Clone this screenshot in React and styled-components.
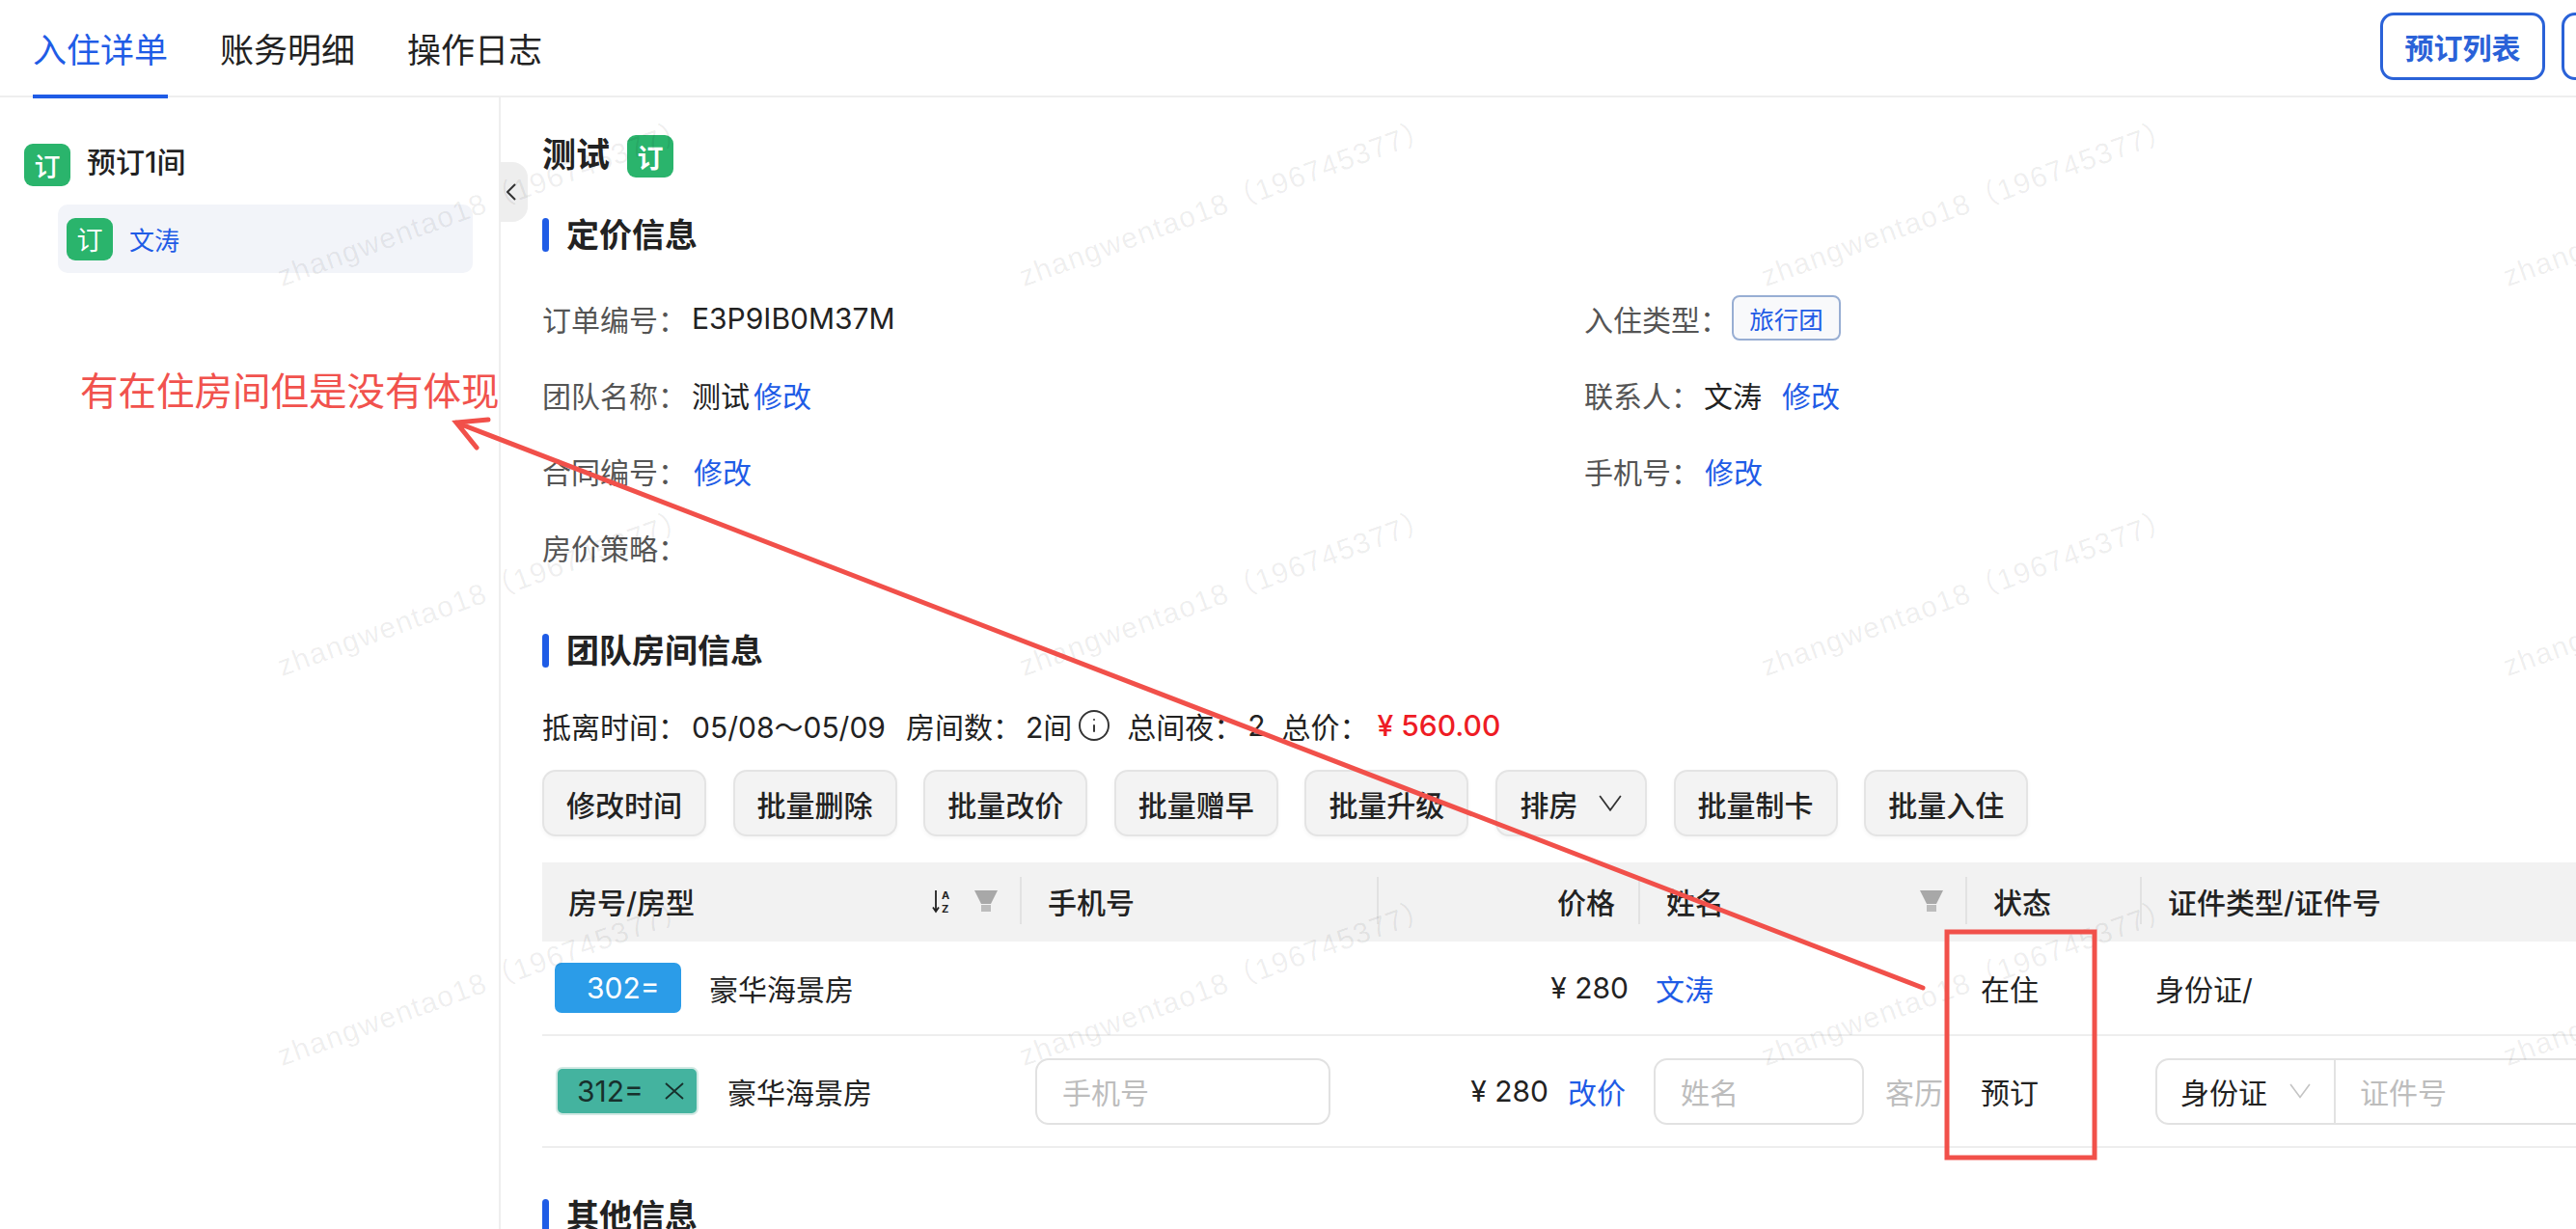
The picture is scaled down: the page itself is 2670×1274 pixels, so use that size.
import React from 'react';
import styled, { createGlobalStyle } from 'styled-components';
import { Info } from 'lucide-react';

const GlobalStyle = createGlobalStyle`
  html, body {
    margin: 0;
    padding: 0;
    background: #ffffff;
    overflow: hidden;
  }
  * {
    box-sizing: border-box;
  }
`;

const BLUE = '#1f5ce6';
const GREEN = '#2ab46c';

const Page = styled.div`
  position: relative;
  width: 2670px;
  height: 1274px;
  overflow: hidden;
  display: flex;
  flex-direction: column;
  background: #ffffff;
  color: #222222;
  font-family: Inter, 'Noto Sans CJK SC', sans-serif;
  font-size: 30px;
`;

const TopBar = styled.header`
  flex: none;
  height: 101px;
  padding-left: 34px;
  display: flex;
  border-bottom: 2px solid #eeeeee;
`;

const Tabs = styled.nav`
  display: flex;
  gap: 54px;
`;

const Tab = styled.div`
  height: 102px;
  display: flex;
  align-items: center;
  font-size: 35px;
  color: ${(p) => (p.$active ? BLUE : '#222222')};
  border-bottom: 4px solid ${(p) => (p.$active ? BLUE : 'transparent')};
`;

const TopActions = styled.div`
  margin-left: auto;
  width: 203px;
  padding-top: 13px;
  display: flex;
  gap: 17px;
  overflow: hidden;
`;

const OutlineButton = styled.div`
  flex: none;
  width: 171px;
  height: 70px;
  display: flex;
  align-items: center;
  justify-content: center;
  border: 3px solid #2a62d8;
  border-radius: 14px;
  color: #2a62d8;
  font-size: 30px;
  font-weight: 600;
`;

const Body = styled.div`
  flex: 1;
  position: relative;
  display: flex;
  min-height: 0;
`;

const Sidebar = styled.aside`
  flex: none;
  width: 519px;
  padding-top: 48px;
  border-right: 2px solid #eeeeee;
`;

const GroupHead = styled.div`
  height: 44px;
  display: flex;
  align-items: center;
  gap: 17px;
  padding-left: 25px;
  font-size: 30px;
  font-weight: 500;
`;

const RaisedText = styled.span`
  line-height: 1;
  padding-bottom: ${(p) => p.$by}px;
`;

const OrderBadge = styled.span`
  flex: none;
  width: 48px;
  height: 44px;
  display: flex;
  align-items: center;
  justify-content: center;
  background: ${GREEN};
  border-radius: 9px;
  color: #ffffff;
  font-size: 27px;
`;

const GuestRow = styled.div`
  margin: 19px 0 0 60px;
  width: 430px;
  height: 71px;
  padding-left: 9px;
  display: flex;
  align-items: center;
  gap: 17px;
  background: #f2f4f9;
  border-radius: 10px;
  color: ${BLUE};
  font-size: 26px;
`;

const CollapseHandle = styled.div`
  position: absolute;
  left: 519px;
  top: 67px;
  width: 28px;
  height: 62px;
  display: flex;
  align-items: center;
  padding-left: 6px;
  background: #eeeeee;
  border-radius: 0 16px 16px 0;
`;

const Main = styled.main`
  flex: 1;
  min-width: 0;
  padding: 39px 0 0 43px;
`;

const TitleRow = styled.div`
  height: 44px;
  display: flex;
  align-items: center;
  gap: 18px;
  font-size: 35px;
  font-weight: 700;
`;

const SectionTitle = styled.h3`
  margin: ${(p) => p.$top}px 0 0;
  height: 35px;
  padding-bottom: 4px;
  display: flex;
  align-items: center;
  gap: 18px;
  font-size: 34px;
  font-weight: 700;

  &::before {
    content: '';
    flex: none;
    align-self: flex-start;
    width: 7px;
    height: 35px;
    background: ${BLUE};
    border-radius: 4px;
  }
`;

const InfoGrid = styled.div`
  margin-top: 29px;
  display: grid;
  grid-template-columns: 1080px 1fr;
  grid-auto-rows: 79px;
`;

const InfoItem = styled.div`
  display: flex;
  align-items: center;
`;

const Label = styled.span`
  color: #555555;
`;

const Value = styled.span`
  margin-left: ${(p) => p.$gap || 0}px;
`;

const EditLink = styled.a`
  color: ${BLUE};
  margin-left: ${(p) => p.$gap || 0}px;
`;

const TypeTag = styled.span`
  margin-left: 3px;
  width: 113px;
  height: 47px;
  display: flex;
  align-items: center;
  justify-content: center;
  background: #f8f9fb;
  border: 2px solid #98aed3;
  border-radius: 8px;
  color: ${BLUE};
  font-size: 25.5px;
`;

const SummaryLine = styled.div`
  margin-top: 40px;
  height: 40px;
  display: flex;
  align-items: center;
`;

const SummaryItem = styled.span`
  margin-right: ${(p) => p.$gap}px;
  display: flex;
  align-items: center;
`;

const TotalPrice = styled.span`
  color: #ee1c25;
  font-weight: 500;
  margin-left: 9px;
`;

const InfoIcon = styled(Info)`
  margin-left: 5px;
`;

const ButtonRow = styled.div`
  margin-top: 26px;
  display: flex;
  gap: 27.6px;
`;

const GrayButton = styled.div`
  flex: none;
  width: ${(p) => p.$width || 170}px;
  height: 69px;
  display: flex;
  align-items: center;
  justify-content: center;
  gap: 22px;
  background: #f3f3f3;
  border: 2px solid #e4e4e4;
  border-radius: 14px;
  box-shadow: 0 2px 4px rgba(0, 0, 0, 0.04);
  font-size: 30px;
  font-weight: 500;
`;

const COLUMNS = '497px 370px 271px 339px 181px 450px';

const TableHead = styled.div`
  margin-top: 27px;
  height: 82px;
  display: grid;
  grid-template-columns: ${COLUMNS};
  background: #f2f2f2;
  font-weight: 500;
`;

const HeadCell = styled.div`
  position: relative;
  display: flex;
  align-items: center;
  justify-content: ${(p) => (p.$right ? 'flex-end' : 'flex-start')};
  padding: ${(p) => (p.$right ? '0 26px 2px 0' : '0 25px 2px 27px')};

  &:not(:last-child)::after {
    content: '';
    position: absolute;
    right: 0;
    top: 15px;
    height: 49px;
    width: 2px;
    background: #e2e2e2;
  }
`;

const HeadIcons = styled.span`
  margin-left: auto;
  display: flex;
  align-items: center;
  gap: 22px;
`;

const TableRow = styled.div`
  height: ${(p) => p.$height}px;
  display: grid;
  grid-template-columns: ${COLUMNS};
  border-bottom: 2px solid #eeeeee;
`;

const Cell = styled.div`
  min-width: 0;
  display: flex;
  align-items: center;
  justify-content: ${(p) => (p.$right ? 'flex-end' : 'flex-start')};
  padding: ${(p) => (p.$right ? `0 ${p.$pad}px 0 0` : `0 0 0 ${p.$pad}px`)};
  gap: ${(p) => p.$gap || 0}px;
`;

const RoomTag = styled.span`
  flex: none;
  width: 131px;
  height: 52px;
  padding-left: 33px;
  display: flex;
  align-items: center;
  background: #2b9ce8;
  border-radius: 7px;
  color: #ffffff;
`;

const AssignedTag = styled.span`
  flex: none;
  width: 148px;
  height: 50px;
  padding: 0 12px 0 20px;
  display: flex;
  align-items: center;
  justify-content: space-between;
  background: #44b39f;
  border: 2px solid #d3e9e4;
  border-radius: 7px;
  color: #17302c;
`;

const Field = styled.div`
  flex: none;
  width: ${(p) => p.$width}px;
  height: 69px;
  padding-left: 26px;
  display: flex;
  align-items: center;
  border: 2px solid #e2e2e2;
  border-radius: 14px;
  color: #bdbdbd;
`;

const MutedText = styled.span`
  color: #bdbdbd;
`;

const IdGroup = styled.div`
  flex: none;
  width: 640px;
  height: 69px;
  display: flex;
  border: 2px solid #e2e2e2;
  border-radius: 14px;
`;

const IdSelect = styled.div`
  flex: none;
  width: 185px;
  padding: 0 24px;
  display: flex;
  align-items: center;
  justify-content: space-between;
  border-right: 2px solid #e2e2e2;
`;

const IdInput = styled.div`
  flex: 1;
  padding-left: 25px;
  display: flex;
  align-items: center;
  color: #bdbdbd;
`;

const Watermarks = styled.div`
  position: absolute;
  inset: 0;
  padding: 262px 0 0 294px;
  display: grid;
  grid-template-columns: repeat(4, 769px);
  grid-auto-rows: 404px;
  overflow: hidden;
  pointer-events: none;
`;

const Watermark = styled.span`
  height: 40px;
  white-space: nowrap;
  transform-origin: 0 100%;
  transform: rotate(-20deg);
  color: rgba(0, 0, 0, 0.07);
  font-family: 'Liberation Sans', 'Noto Sans CJK SC', sans-serif;
  font-size: 30px;
  letter-spacing: 1.3px;
`;

const Markup = styled.svg`
  position: absolute;
  inset: 0;
  pointer-events: none;
`;

const Annotation = styled.div`
  position: absolute;
  left: 83px;
  top: 382px;
  color: #f1524d;
  font-size: 39.5px;
  line-height: 48px;
  white-space: nowrap;
`;

function SortIcon() {
  return (
    <svg width="22" height="25" viewBox="0 0 22 25">
      <path d="M4 1v21M1 18.5l3 4.5 3-4.5" fill="none" stroke="#222" strokeWidth="1.8" />
      <text x="10" y="10" fontSize="11" fontWeight="700" fill="#222">A</text>
      <text x="10" y="24" fontSize="11" fontWeight="700" fill="#222">Z</text>
    </svg>
  );
}

function FilterIcon() {
  return (
    <svg width="24" height="22" viewBox="0 0 24 22">
      <polygon points="0,0 24,0 17,14 7,14" fill="#a8a8a8" />
      <rect x="7" y="15" width="10" height="7" fill="#bcbcbc" />
    </svg>
  );
}

function Chevron({ color = '#333', width = 24 }) {
  return (
    <svg width={width} height={width * 0.7} viewBox="0 0 24 17">
      <path d="M1 1l11 15L23 1" fill="none" stroke={color} strokeWidth="1.8" />
    </svg>
  );
}

function App() {
  const batchButtons = ['修改时间', '批量删除', '批量改价', '批量赠早', '批量升级'];
  const marks = Array.from({ length: 12 });

  return (
    <Page>
      <GlobalStyle />
      <TopBar>
        <Tabs>
          <Tab $active>入住详单</Tab>
          <Tab>账务明细</Tab>
          <Tab>操作日志</Tab>
        </Tabs>
        <TopActions>
          <OutlineButton>预订列表</OutlineButton>
          <OutlineButton />
        </TopActions>
      </TopBar>

      <Body>
        <Sidebar>
          <GroupHead>
            <OrderBadge>订</OrderBadge>
            <RaisedText $by={6}>预订1间</RaisedText>
          </GroupHead>
          <GuestRow>
            <OrderBadge>订</OrderBadge>
            文涛
          </GuestRow>
        </Sidebar>
        <CollapseHandle>
          <svg width="10" height="18" viewBox="0 0 10 18">
            <path d="M9 1L1 9l8 8" fill="none" stroke="#333" strokeWidth="2" />
          </svg>
        </CollapseHandle>

        <Main>
          <TitleRow>
            <RaisedText $by={4}>测试</RaisedText>
            <OrderBadge>订</OrderBadge>
          </TitleRow>

          <SectionTitle $top={42}>定价信息</SectionTitle>
          <InfoGrid>
            <InfoItem>
              <Label>订单编号：</Label>
              <Value $gap={5}>E3P9IB0M37M</Value>
            </InfoItem>
            <InfoItem>
              <Label>入住类型：</Label>
              <TypeTag>旅行团</TypeTag>
            </InfoItem>
            <InfoItem>
              <Label>团队名称：</Label>
              <Value $gap={5}>测试</Value>
              <EditLink $gap={4}>修改</EditLink>
            </InfoItem>
            <InfoItem>
              <Label>联系人：</Label>
              <Value $gap={4}>文涛</Value>
              <EditLink $gap={21}>修改</EditLink>
            </InfoItem>
            <InfoItem>
              <Label>合同编号：</Label>
              <EditLink $gap={7}>修改</EditLink>
            </InfoItem>
            <InfoItem>
              <Label>手机号：</Label>
              <EditLink $gap={5}>修改</EditLink>
            </InfoItem>
            <InfoItem>
              <Label>房价策略：</Label>
            </InfoItem>
          </InfoGrid>

          <SectionTitle $top={51}>团队房间信息</SectionTitle>
          <SummaryLine>
            <SummaryItem $gap={21}>
              抵离时间：<Value $gap={5}>05/08～05/09</Value>
            </SummaryItem>
            <SummaryItem $gap={16}>
              房间数：<Value $gap={4}>2间</Value>
              <InfoIcon size={36} strokeWidth={1.3} color="#333" />
            </SummaryItem>
            <SummaryItem $gap={17}>
              总间夜：<Value $gap={5}>2</Value>
            </SummaryItem>
            <SummaryItem $gap={0}>
              总价：
              <TotalPrice>¥ 560.00</TotalPrice>
            </SummaryItem>
          </SummaryLine>

          <ButtonRow>
            {batchButtons.map((text) => (
              <GrayButton key={text}>{text}</GrayButton>
            ))}
            <GrayButton $width={157}>
              排房
              <Chevron />
            </GrayButton>
            <GrayButton>批量制卡</GrayButton>
            <GrayButton>批量入住</GrayButton>
          </ButtonRow>

          <TableHead>
            <HeadCell>
              房号/房型
              <HeadIcons>
                <SortIcon />
                <FilterIcon />
              </HeadIcons>
            </HeadCell>
            <HeadCell>手机号</HeadCell>
            <HeadCell $right>价格</HeadCell>
            <HeadCell>
              姓名
              <HeadIcons>
                <FilterIcon />
              </HeadIcons>
            </HeadCell>
            <HeadCell>状态</HeadCell>
            <HeadCell>证件类型/证件号</HeadCell>
          </TableHead>

          <TableRow $height={98}>
            <Cell $pad={13} $gap={29}>
              <RoomTag>302=</RoomTag>
              豪华海景房
            </Cell>
            <Cell $pad={0} />
            <Cell $right $pad={12}>¥ 280</Cell>
            <Cell $pad={16}>
              <EditLink>文涛</EditLink>
            </Cell>
            <Cell $pad={14}>在住</Cell>
            <Cell $pad={14}>身份证/</Cell>
          </TableRow>

          <TableRow $height={116}>
            <Cell $pad={14} $gap={30}>
              <AssignedTag>
                312=
                <svg width="22" height="18" viewBox="0 0 22 18">
                  <path d="M2 1l18 16M20 1L2 17" fill="none" stroke="#17302c" strokeWidth="1.8" />
                </svg>
              </AssignedTag>
              豪华海景房
            </Cell>
            <Cell $pad={14}>
              <Field $width={306}>手机号</Field>
            </Cell>
            <Cell $right $pad={15} $gap={20}>
              <span>¥ 280</span>
              <EditLink>改价</EditLink>
            </Cell>
            <Cell $pad={14} $gap={22}>
              <Field $width={218}>姓名</Field>
              <MutedText>客历</MutedText>
            </Cell>
            <Cell $pad={14}>预订</Cell>
            <Cell $pad={14}>
              <IdGroup>
                <IdSelect>
                  身份证
                  <Chevron color="#c4c4c4" width={22} />
                </IdSelect>
                <IdInput>证件号</IdInput>
              </IdGroup>
            </Cell>
          </TableRow>

          <SectionTitle $top={53}>其他信息</SectionTitle>
        </Main>
      </Body>

      <Watermarks>
        {marks.map((_, i) => (
          <Watermark key={i}>zhangwentao18（196745377）</Watermark>
        ))}
      </Watermarks>

      <Annotation>有在住房间但是没有体现</Annotation>
      <Markup width="2670" height="1274" viewBox="0 0 2670 1274">
        <g fill="none" stroke="#f1504a" strokeWidth="5" strokeLinecap="round">
          <path d="M1993 1024L473 438M506 435L473 438L494 464" />
          <rect x="2018" y="966" width="153" height="234" strokeLinecap="butt" />
        </g>
      </Markup>
    </Page>
  );
}

export default App;
